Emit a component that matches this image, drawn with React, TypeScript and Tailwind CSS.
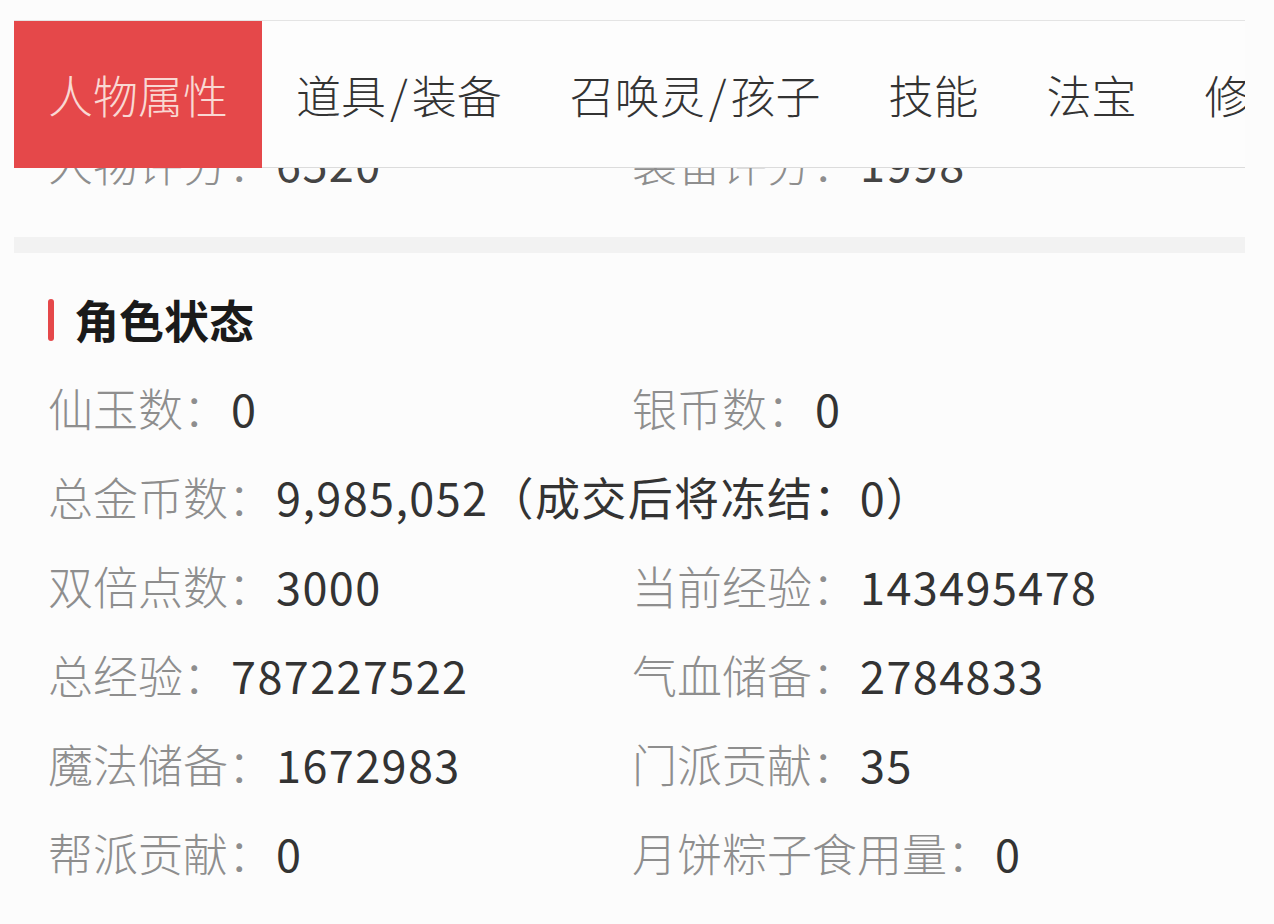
import React from 'react';

const FONT = '"Noto Sans CJK SC", "Noto Sans", sans-serif';

const tabs = ['人物属性', '道具/装备', '召唤灵/孩子', '技能', '法宝', '修炼'];

interface Stat {
  label: string;
  value: string;
  wide?: boolean;
}

const stats: Stat[] = [
  { label: '仙玉数', value: '0' },
  { label: '银币数', value: '0' },
  { label: '总金币数', value: '9,985,052（成交后将冻结：0）', wide: true },
  { label: '双倍点数', value: '3000' },
  { label: '当前经验', value: '143495478' },
  { label: '总经验', value: '787227522' },
  { label: '气血储备', value: '2784833' },
  { label: '魔法储备', value: '1672983' },
  { label: '门派贡献', value: '35' },
  { label: '帮派贡献', value: '0' },
  { label: '月饼粽子食用量', value: '0' },
];

// tab labels with the slash given a bit more room, as in the app
const TabLabel: React.FC<{ text: string }> = ({ text }) => {
  const parts = text.split('/');
  if (parts.length === 1) return <>{text}</>;
  return (
    <>
      {parts[0]}
      <span className="mx-[4px]">/</span>
      {parts[1]}
    </>
  );
};

const StatItem: React.FC<{ stat: Stat }> = ({ stat }) => (
  <div className={`h-[89px] flex items-center whitespace-nowrap ${stat.wide ? 'col-span-2' : ''}`}>
    <span className="text-[#8e8e8e] font-light">{stat.label}：</span>
    <span className="text-[#333333] ml-[3px] tracking-[1.4px]">{stat.value}</span>
  </div>
);

export default function App() {
  return (
    <div className="w-full h-[924px] bg-[#fcfcfc] overflow-hidden pt-[20px] pl-[14px] pr-[29px]" style={{ fontFamily: FONT }}>
      <div className="text-[45px] leading-none">
        {/* Tab bar */}
        <div className="flex h-[148px] overflow-hidden border-t border-[#e4e4e4]">
          {tabs.map((tab, i) =>
            i === 0 ? (
              <div key={tab} className="shrink-0 -mt-px bg-[#e5484a] text-[#f9d8d3] font-light px-[34px] flex items-center">
                {tab}
              </div>
            ) : (
              <div key={tab} className="shrink-0 bg-[#fdfdfd] text-[#333333] font-light px-[34px] flex items-center border-b border-[#dcdcdc]">
                <TabLabel text={tab} />
              </div>
            )
          )}
        </div>

        {/* Scrolled score row, half hidden under the tabs */}
        <div className="h-[69px] overflow-hidden px-[34px]">
          <div className="-mt-[50px] grid grid-cols-[584px_1fr]">
            <div className="h-[89px] flex items-center whitespace-nowrap">
              <span className="text-[#8e8e8e] font-light">人物评分：</span>
              <span className="text-[#444444] ml-[3px] tracking-[1.4px]">6520</span>
            </div>
            <div className="h-[89px] flex items-center whitespace-nowrap">
              <span className="text-[#8e8e8e] font-light">装备评分：</span>
              <span className="text-[#444444] ml-[3px] tracking-[1.4px]">1998</span>
            </div>
          </div>
        </div>

        <div className="h-[16px] bg-[#f2f2f2]" />

        {/* 角色状态 */}
        <div className="px-[34px] pt-[44px]">
          <div className="flex items-center h-[45px]">
            <div className="w-[6px] h-[42px] rounded-full bg-[#e5484a]" />
            <h2 className="ml-[20px] font-bold text-[#1a1a1a]">角色状态</h2>
          </div>
          <div className="mt-[21px] grid grid-cols-[584px_1fr]">
            {stats.map(s => (
              <StatItem key={s.label} stat={s} />
            ))}
          </div>
        </div>
      </div>
    </div>
  );
}
